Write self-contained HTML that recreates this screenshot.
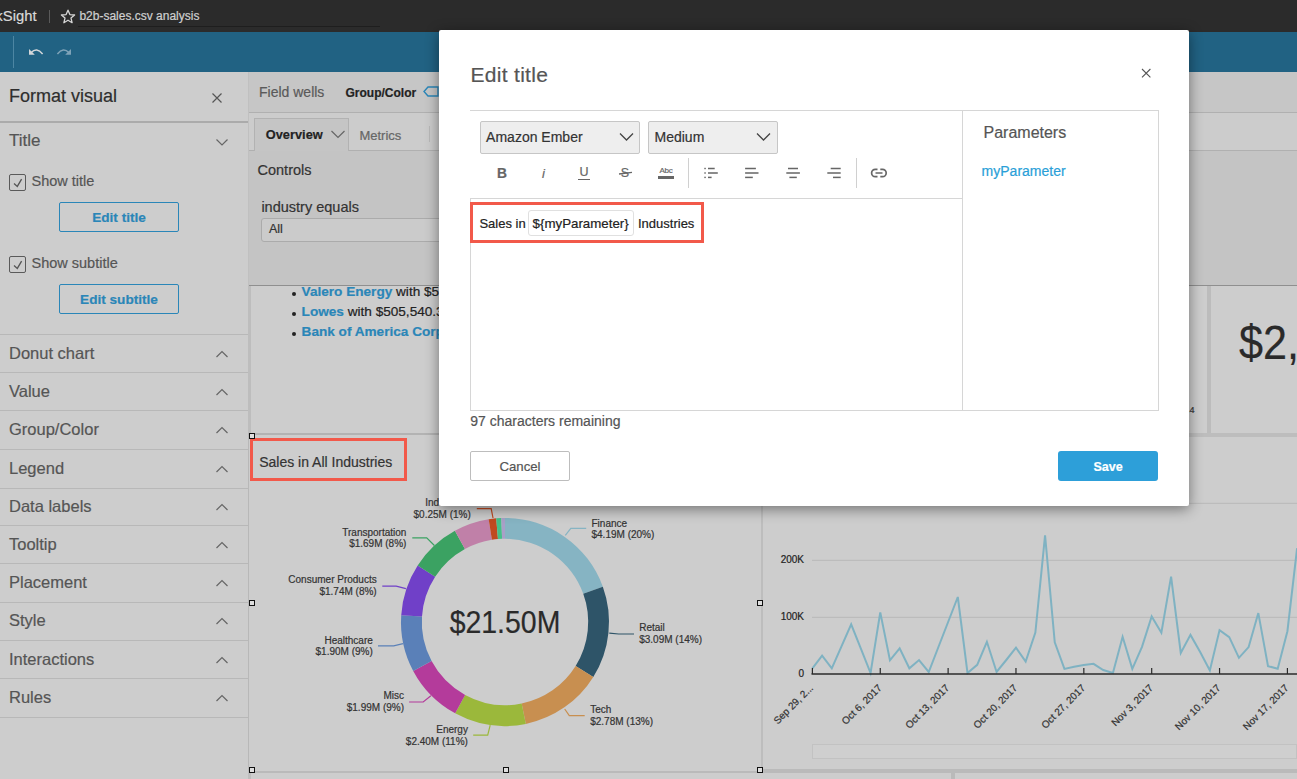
<!DOCTYPE html>
<html><head><meta charset="utf-8"><style>
html,body{margin:0;padding:0;width:1297px;height:779px;overflow:hidden;background:#cdcdcd;position:relative}
.t{position:absolute;line-height:1;white-space:nowrap;font-family:"Liberation Sans",sans-serif;-webkit-text-stroke:0.2px currentColor}
.r{position:absolute}
</style></head><body>
<div class="r" style="left:0px;top:0px;width:1297px;height:32px;background:#2b2b2b;"></div>
<div class="t" style="right:1260.50px;top:9.17px;font-size:14.8px;color:#d9d9d9;font-weight:400;">QuickSight</div>
<div class="r" style="left:49px;top:10px;width:1px;height:13px;background:#5a5a5a;"></div>
<svg class="r" style="left:60px;top:9px;" width="16" height="15" viewBox="0 0 16 15"><path d="M8 1.2 L9.9 5.6 L14.6 6 L11 9.1 L12.1 13.7 L8 11.2 L3.9 13.7 L5 9.1 L1.4 6 L6.1 5.6 Z" fill="none" stroke="#d6d6d6" stroke-width="1.3" stroke-linejoin="round"/></svg>
<div class="t" style="left:79.40px;top:10.34px;font-size:12px;color:#d0d0d0;font-weight:400;">b2b-sales.csv analysis</div>
<div class="r" style="left:78px;top:26px;width:302px;height:1px;background:#1e1e1e;"></div>
<div class="r" style="left:0px;top:32px;width:1297px;height:40px;background:#216283;"></div>
<div class="r" style="left:13px;top:36px;width:1px;height:32px;background:#4d86a3;"></div>
<svg class="r" style="left:27px;top:45px;" width="18" height="14" viewBox="0 0 18 14"><path d="M2 4 L2 9.8 L7.8 9.8 Z" fill="#d3d7da"/><path d="M4.2 7.6 Q9.6 1.6 15.6 8.9" fill="none" stroke="#d3d7da" stroke-width="1.5"/></svg>
<svg class="r" style="left:55px;top:45px;" width="18" height="14" viewBox="0 0 18 14"><path d="M16 4 L16 9.8 L10.2 9.8 Z" fill="#7fa3b8"/><path d="M13.8 7.6 Q8.4 1.6 2.4 8.9" fill="none" stroke="#7fa3b8" stroke-width="1.5"/></svg>
<div class="r" style="left:0px;top:72px;width:248px;height:1225px;background:#cdcdcd;"></div>
<div class="r" style="left:248px;top:72px;width:1px;height:214px;background:#c0c0c0;"></div>
<div class="t" style="left:9.00px;top:87.46px;font-size:18px;color:#2e2e2e;font-weight:400;">Format visual</div>
<svg class="r" style="left:211px;top:92px;" width="12" height="12" viewBox="0 0 12 12"><path d="M1.5 1.5 L10.5 10.5 M10.5 1.5 L1.5 10.5" stroke="#555" stroke-width="1.2"/></svg>
<div class="r" style="left:0px;top:121px;width:248px;height:2px;background:#ababab;"></div>
<div class="t" style="left:9.00px;top:132.41px;font-size:17px;color:#555;font-weight:400;">Title</div>
<svg class="r" style="left:215px;top:137px;" width="14" height="10" viewBox="0 0 14 10"><path d="M1.5 2.5 L7 8 L12.5 2.5" fill="none" stroke="#666" stroke-width="1.2"/></svg>
<div class="r" style="left:9px;top:174px;width:17px;height:17px;border:1.5px solid #5a5a5a;box-sizing:border-box;border-radius:2px;"></div>
<svg class="r" style="left:9px;top:174px;" width="17" height="17" viewBox="0 0 17 17"><path d="M5 9.6 L8.3 12.4 L12.6 5.2" fill="none" stroke="#555" stroke-width="1.3"/></svg>
<div class="t" style="left:31.50px;top:174.13px;font-size:14.5px;color:#555;font-weight:400;">Show title</div>
<div class="r" style="left:59px;top:202px;width:120px;height:30px;border:1px solid #2a86b8;box-sizing:border-box;border-radius:2px;"></div>
<div class="t" style="left:119.00px;transform:translateX(-50%);top:211.49px;font-size:13.6px;color:#2a86b8;font-weight:700;">Edit title</div>
<div class="r" style="left:9px;top:256px;width:17px;height:17px;border:1.5px solid #5a5a5a;box-sizing:border-box;border-radius:2px;"></div>
<svg class="r" style="left:9px;top:256px;" width="17" height="17" viewBox="0 0 17 17"><path d="M5 9.6 L8.3 12.4 L12.6 5.2" fill="none" stroke="#555" stroke-width="1.3"/></svg>
<div class="t" style="left:31.50px;top:256.13px;font-size:14.5px;color:#555;font-weight:400;">Show subtitle</div>
<div class="r" style="left:59px;top:284px;width:120px;height:30px;border:1px solid #2a86b8;box-sizing:border-box;border-radius:2px;"></div>
<div class="t" style="left:119.00px;transform:translateX(-50%);top:293.49px;font-size:13.6px;color:#2a86b8;font-weight:700;">Edit subtitle</div>
<div class="r" style="left:0px;top:334px;width:248px;height:1px;background:#b8b8b8;"></div>
<div class="t" style="left:9.00px;top:345.13px;font-size:16.5px;color:#555;font-weight:400;">Donut chart</div>
<svg class="r" style="left:215px;top:349px;" width="14" height="10" viewBox="0 0 14 10"><path d="M1.5 8 L7 2.5 L12.5 8" fill="none" stroke="#666" stroke-width="1.2"/></svg>
<div class="r" style="left:0px;top:372px;width:248px;height:1px;background:#b8b8b8;"></div>
<div class="t" style="left:9.00px;top:383.13px;font-size:16.5px;color:#555;font-weight:400;">Value</div>
<svg class="r" style="left:215px;top:387px;" width="14" height="10" viewBox="0 0 14 10"><path d="M1.5 8 L7 2.5 L12.5 8" fill="none" stroke="#666" stroke-width="1.2"/></svg>
<div class="r" style="left:0px;top:410px;width:248px;height:1px;background:#b8b8b8;"></div>
<div class="t" style="left:9.00px;top:421.03px;font-size:16.5px;color:#555;font-weight:400;">Group/Color</div>
<svg class="r" style="left:215px;top:425px;" width="14" height="10" viewBox="0 0 14 10"><path d="M1.5 8 L7 2.5 L12.5 8" fill="none" stroke="#666" stroke-width="1.2"/></svg>
<div class="r" style="left:0px;top:449px;width:248px;height:1px;background:#b8b8b8;"></div>
<div class="t" style="left:9.00px;top:460.13px;font-size:16.5px;color:#555;font-weight:400;">Legend</div>
<svg class="r" style="left:215px;top:464px;" width="14" height="10" viewBox="0 0 14 10"><path d="M1.5 8 L7 2.5 L12.5 8" fill="none" stroke="#666" stroke-width="1.2"/></svg>
<div class="r" style="left:0px;top:488px;width:248px;height:1px;background:#b8b8b8;"></div>
<div class="t" style="left:9.00px;top:498.43px;font-size:16.5px;color:#555;font-weight:400;">Data labels</div>
<svg class="r" style="left:215px;top:502px;" width="14" height="10" viewBox="0 0 14 10"><path d="M1.5 8 L7 2.5 L12.5 8" fill="none" stroke="#666" stroke-width="1.2"/></svg>
<div class="r" style="left:0px;top:525px;width:248px;height:1px;background:#b8b8b8;"></div>
<div class="t" style="left:9.00px;top:536.03px;font-size:16.5px;color:#555;font-weight:400;">Tooltip</div>
<svg class="r" style="left:215px;top:540px;" width="14" height="10" viewBox="0 0 14 10"><path d="M1.5 8 L7 2.5 L12.5 8" fill="none" stroke="#666" stroke-width="1.2"/></svg>
<div class="r" style="left:0px;top:563px;width:248px;height:1px;background:#b8b8b8;"></div>
<div class="t" style="left:9.00px;top:574.03px;font-size:16.5px;color:#555;font-weight:400;">Placement</div>
<svg class="r" style="left:215px;top:578px;" width="14" height="10" viewBox="0 0 14 10"><path d="M1.5 8 L7 2.5 L12.5 8" fill="none" stroke="#666" stroke-width="1.2"/></svg>
<div class="r" style="left:0px;top:602px;width:248px;height:1px;background:#b8b8b8;"></div>
<div class="t" style="left:9.00px;top:612.43px;font-size:16.5px;color:#555;font-weight:400;">Style</div>
<svg class="r" style="left:215px;top:616px;" width="14" height="10" viewBox="0 0 14 10"><path d="M1.5 8 L7 2.5 L12.5 8" fill="none" stroke="#666" stroke-width="1.2"/></svg>
<div class="r" style="left:0px;top:640px;width:248px;height:1px;background:#b8b8b8;"></div>
<div class="t" style="left:9.00px;top:651.23px;font-size:16.5px;color:#555;font-weight:400;">Interactions</div>
<svg class="r" style="left:215px;top:655px;" width="14" height="10" viewBox="0 0 14 10"><path d="M1.5 8 L7 2.5 L12.5 8" fill="none" stroke="#666" stroke-width="1.2"/></svg>
<div class="r" style="left:0px;top:678px;width:248px;height:1px;background:#b8b8b8;"></div>
<div class="t" style="left:9.00px;top:689.23px;font-size:16.5px;color:#555;font-weight:400;">Rules</div>
<svg class="r" style="left:215px;top:693px;" width="14" height="10" viewBox="0 0 14 10"><path d="M1.5 8 L7 2.5 L12.5 8" fill="none" stroke="#666" stroke-width="1.2"/></svg>
<div class="r" style="left:0px;top:717px;width:248px;height:1px;background:#b8b8b8;"></div>
<div class="r" style="left:249px;top:72px;width:1048px;height:40px;background:#c6c6c6;"></div>
<div class="t" style="left:259.00px;top:85.15px;font-size:14px;color:#5a5a5a;font-weight:400;">Field wells</div>
<div class="t" style="left:345.50px;top:87.24px;font-size:12px;color:#222;font-weight:700;">Group/Color</div>
<svg class="r" style="left:422px;top:86px;" width="18" height="12" viewBox="0 0 18 12"><path d="M6 1 L16 1 L16 10 L6 10 L2 5.5 Z" fill="none" stroke="#2a86b8" stroke-width="1.4"/></svg>
<div class="r" style="left:249px;top:112px;width:1048px;height:1px;background:#b0b0b0;"></div>
<div class="r" style="left:249px;top:113px;width:1048px;height:37px;background:#cccccc;"></div>
<div class="r" style="left:254px;top:118px;width:95px;height:33px;background:#c5c5c5;border:1px solid #b2b2b2;box-sizing:border-box;border-bottom:none;"></div>
<div class="r" style="left:249px;top:150px;width:5px;height:1px;background:#b0b0b0;"></div>
<div class="r" style="left:349px;top:150px;width:948px;height:1px;background:#b0b0b0;"></div>
<div class="t" style="left:265.80px;top:128.86px;font-size:12.8px;color:#222;font-weight:700;">Overview</div>
<svg class="r" style="left:330px;top:129px;" width="16" height="11" viewBox="0 0 16 11"><path d="M1.5 2 L8 8.5 L14.5 2" fill="none" stroke="#666" stroke-width="1.2"/></svg>
<div class="t" style="left:359.40px;top:128.70px;font-size:13px;color:#666;font-weight:400;">Metrics</div>
<div class="r" style="left:429px;top:126px;width:1px;height:16px;background:#b8b8b8;"></div>
<div class="r" style="left:249px;top:151px;width:1048px;height:134px;background:#c4c4c4;"></div>
<div class="t" style="left:257.50px;top:162.73px;font-size:14.5px;color:#333;font-weight:400;">Controls</div>
<div class="t" style="left:261.40px;top:199.73px;font-size:14.5px;color:#333;font-weight:400;">industry equals</div>
<div class="r" style="left:261px;top:218px;width:439px;height:24px;background:#cbcbcb;border:1px solid #ababab;box-sizing:border-box;border-radius:3px;"></div>
<div class="t" style="left:269.00px;top:223.42px;font-size:12.5px;color:#333;font-weight:400;">All</div>
<div class="r" style="left:249px;top:285px;width:1048px;height:1px;background:#8f8f8f;"></div>
<div class="r" style="left:250px;top:286px;width:1047px;height:493px;background:#cdcdcd;"></div>
<div class="r" style="left:248px;top:286px;width:3px;height:147px;background:#bdbdbd;"></div>
<div class="r" style="left:248px;top:433px;width:1px;height:338px;background:#b8b8b8;"></div>
<div class="r" style="left:248px;top:771px;width:3px;height:8px;background:#bdbdbd;"></div>
<div class="r" style="left:292px;top:291.5px;width:4px;height:4.0px;background:#222;border-radius:2px;"></div>
<div class="t" style="left:301.6px;top:284.99px;font-size:13.6px;color:#222"><b style="color:#2a86b8">Valero Energy</b> with $567,340.21</div>
<div class="r" style="left:292px;top:311.5px;width:4px;height:4.0px;background:#222;border-radius:2px;"></div>
<div class="t" style="left:301.6px;top:304.99px;font-size:13.6px;color:#222"><b style="color:#2a86b8">Lowes</b> with $505,540.37</div>
<div class="r" style="left:292px;top:331.5px;width:4px;height:4.0px;background:#222;border-radius:2px;"></div>
<div class="t" style="left:301.6px;top:324.99px;font-size:13.6px;color:#222"><b style="color:#2a86b8">Bank of America Corp</b> with $4</div>
<div class="r" style="left:1207px;top:286px;width:4px;height:147px;background:#bcbcbc;"></div>
<div class="t" style="left:1187.00px;top:406.38px;font-size:9px;color:#333;font-weight:400;">.4</div>
<div class="t" style="left:1239.00px;top:319.37px;font-size:48px;color:#2a2a2a;font-weight:400;transform-origin:0 0;transform:scaleX(0.9);">$2,</div>
<div class="r" style="left:248px;top:433px;width:941px;height:2px;background:#b3b3b3;"></div>
<div class="r" style="left:1189px;top:433px;width:108px;height:4px;background:#bdbdbd;"></div>
<div class="r" style="left:761px;top:437px;width:2px;height:334px;background:#bdbdbd;"></div>
<div class="r" style="left:249px;top:771px;width:512px;height:2px;background:#bababa;"></div>
<div class="r" style="left:761px;top:769px;width:536px;height:4px;background:#bababa;"></div>
<div class="r" style="left:951px;top:773px;width:4px;height:6px;background:#bababa;"></div>
<div class="r" style="left:250px;top:438px;width:157px;height:43px;border:3px solid #f2594a;box-sizing:border-box;"></div>
<div class="t" style="left:259.20px;top:454.75px;font-size:14px;color:#333;font-weight:400;">Sales in All Industries</div>
<svg class="r" style="left:0px;top:0px;pointer-events:none" width="1297" height="779" viewBox="0 0 1297 779"><path d="M505.00 518.00 A104 104 0 0 1 602.83 586.70 L583.26 593.76 A83.2 83.2 0 0 0 505.00 538.80 Z" fill="#86b4c3"/><path d="M602.83 586.70 A104 104 0 0 1 593.30 676.95 L575.64 665.96 A83.2 83.2 0 0 0 583.26 593.76 Z" fill="#2e5468"/><path d="M593.30 676.95 A104 104 0 0 1 525.83 723.89 L521.66 703.51 A83.2 83.2 0 0 0 575.64 665.96 Z" fill="#c88f50"/><path d="M525.83 723.89 A104 104 0 0 1 455.16 713.28 L465.13 695.03 A83.2 83.2 0 0 0 521.66 703.51 Z" fill="#9bb83b"/><path d="M455.16 713.28 A104 104 0 0 1 413.21 670.90 L431.57 661.12 A83.2 83.2 0 0 0 465.13 695.03 Z" fill="#b43b9b"/><path d="M413.21 670.90 A104 104 0 0 1 401.22 615.17 L421.98 616.53 A83.2 83.2 0 0 0 431.57 661.12 Z" fill="#5a80b8"/><path d="M401.22 615.17 A104 104 0 0 1 417.68 565.51 L435.15 576.81 A83.2 83.2 0 0 0 421.98 616.53 Z" fill="#7040c8"/><path d="M417.68 565.51 A104 104 0 0 1 454.90 530.86 L464.92 549.09 A83.2 83.2 0 0 0 435.15 576.81 Z" fill="#3ba262"/><path d="M454.90 530.86 A104 104 0 0 1 488.66 519.29 L491.92 539.83 A83.2 83.2 0 0 0 464.92 549.09 Z" fill="#c080a8"/><path d="M488.66 519.29 A104 104 0 0 1 496.20 518.37 L497.96 539.10 A83.2 83.2 0 0 0 491.92 539.83 Z" fill="#c04a20"/><path d="M496.20 518.37 A104 104 0 0 1 501.35 518.06 L502.08 538.85 A83.2 83.2 0 0 0 497.96 539.10 Z" fill="#45c088"/><path d="M501.35 518.06 A104 104 0 0 1 505.00 518.00 L505.00 538.80 A83.2 83.2 0 0 0 502.08 538.85 Z" fill="#a8a0c8"/><polyline points="565.3,535.4 570.8,528.4 586.2,528.4" fill="none" stroke="#86b4c3" stroke-width="1.2"/><polyline points="609.3,633.1 618.6,634 634,634" fill="none" stroke="#2e5468" stroke-width="1.2"/><polyline points="564.7,709 569.3,715.7 584.7,715.7" fill="none" stroke="#c88f50" stroke-width="1.2"/><polyline points="490.2,725.1 487.7,735.1 473.2,735.1" fill="none" stroke="#9bb83b" stroke-width="1.2"/><polyline points="430.9,695.7 423.2,702 409.1,702" fill="none" stroke="#b43b9b" stroke-width="1.2"/><polyline points="403,643.7 393.7,645.8 378,645.8" fill="none" stroke="#5a80b8" stroke-width="1.2"/><polyline points="405.9,588.6 396.2,586.1 382.3,586.1" fill="none" stroke="#7040c8" stroke-width="1.2"/><polyline points="434.4,545.5 426.7,537.9 412.3,537.9" fill="none" stroke="#3ba262" stroke-width="1.2"/><polyline points="493,518 491.2,508.6 476.8,508.6" fill="none" stroke="#c04a20" stroke-width="1.2"/></svg>
<div class="t" style="left:504.50px;transform:translateX(-50%);top:606.96px;font-size:31px;color:#2a2a2a;font-weight:400;transform:translateX(-50%) scaleX(0.918);">$21.50M</div>
<div class="t" style="left:591.50px;top:518.63px;font-size:10px;color:#333;font-weight:400;">Finance</div>
<div class="t" style="left:591.50px;top:530.34px;font-size:10px;color:#333;font-weight:400;">$4.19M (20%)</div>
<div class="t" style="left:639.20px;top:623.43px;font-size:10px;color:#333;font-weight:400;">Retail</div>
<div class="t" style="left:639.20px;top:635.13px;font-size:10px;color:#333;font-weight:400;">$3.09M (14%)</div>
<div class="t" style="left:590.20px;top:705.03px;font-size:10px;color:#333;font-weight:400;">Tech</div>
<div class="t" style="left:590.20px;top:716.74px;font-size:10px;color:#333;font-weight:400;">$2.78M (13%)</div>
<div class="t" style="right:829.10px;top:725.03px;font-size:10px;color:#333;font-weight:400;">Energy</div>
<div class="t" style="right:829.10px;top:736.74px;font-size:10px;color:#333;font-weight:400;">$2.40M (11%)</div>
<div class="t" style="right:893.00px;top:691.43px;font-size:10px;color:#333;font-weight:400;">Misc</div>
<div class="t" style="right:893.00px;top:703.13px;font-size:10px;color:#333;font-weight:400;">$1.99M (9%)</div>
<div class="t" style="right:924.20px;top:635.53px;font-size:10px;color:#333;font-weight:400;">Healthcare</div>
<div class="t" style="right:924.20px;top:647.24px;font-size:10px;color:#333;font-weight:400;">$1.90M (9%)</div>
<div class="t" style="right:920.30px;top:575.33px;font-size:10px;color:#333;font-weight:400;">Consumer Products</div>
<div class="t" style="right:920.30px;top:587.03px;font-size:10px;color:#333;font-weight:400;">$1.74M (8%)</div>
<div class="t" style="right:890.60px;top:527.63px;font-size:10px;color:#333;font-weight:400;">Transportation</div>
<div class="t" style="right:890.60px;top:539.34px;font-size:10px;color:#333;font-weight:400;">$1.69M (8%)</div>
<div class="t" style="right:826.20px;top:497.63px;font-size:10px;color:#333;font-weight:400;">Industrials</div>
<div class="t" style="right:826.20px;top:510.14px;font-size:10px;color:#333;font-weight:400;">$0.25M (1%)</div>
<svg class="r" style="left:0px;top:0px;pointer-events:none" width="1297" height="779" viewBox="0 0 1297 779"><line x1="812" y1="617.3" x2="1297" y2="617.3" stroke="#b8b8b8" stroke-width="1"/><line x1="812" y1="560.3" x2="1297" y2="560.3" stroke="#b8b8b8" stroke-width="1"/><line x1="812" y1="503.3" x2="1297" y2="503.3" stroke="#b8b8b8" stroke-width="1"/><polyline points="812.40,668.30 822.09,655.60 831.79,668.30 841.48,646.30 851.18,624.40 860.87,648.60 870.56,673.00 880.26,612.40 889.95,660.30 899.65,648.40 909.34,668.30 919.03,660.10 928.73,672.00 938.42,647.00 948.12,622.00 957.81,597.00 967.50,673.00 977.20,664.80 986.89,641.80 996.59,672.00 1006.28,660.00 1015.97,647.60 1025.67,661.50 1035.36,632.60 1045.06,535.30 1054.75,642.40 1064.44,668.90 1074.14,666.70 1083.83,664.90 1093.53,663.80 1103.22,670.00 1112.91,673.00 1122.61,636.80 1132.30,668.90 1142.00,646.90 1151.69,616.50 1161.38,632.70 1171.08,576.60 1180.77,653.00 1190.47,634.90 1200.16,652.00 1209.85,670.50 1219.55,630.10 1229.24,637.10 1238.94,657.80 1248.63,647.10 1258.32,613.10 1268.02,666.10 1277.71,668.70 1287.41,631.20 1297.10,548.20" fill="none" stroke="#7fb2c2" stroke-width="2" stroke-linejoin="miter"/><line x1="811.5" y1="674" x2="1297" y2="674" stroke="#2a2a2a" stroke-width="1.5"/><line x1="812.40" y1="668" x2="812.40" y2="674" stroke="#2a2a2a" stroke-width="1.2"/><line x1="880.26" y1="668" x2="880.26" y2="674" stroke="#2a2a2a" stroke-width="1.2"/><line x1="948.12" y1="668" x2="948.12" y2="674" stroke="#2a2a2a" stroke-width="1.2"/><line x1="1015.97" y1="668" x2="1015.97" y2="674" stroke="#2a2a2a" stroke-width="1.2"/><line x1="1083.83" y1="668" x2="1083.83" y2="674" stroke="#2a2a2a" stroke-width="1.2"/><line x1="1151.69" y1="668" x2="1151.69" y2="674" stroke="#2a2a2a" stroke-width="1.2"/><line x1="1219.55" y1="668" x2="1219.55" y2="674" stroke="#2a2a2a" stroke-width="1.2"/><line x1="1287.41" y1="668" x2="1287.41" y2="674" stroke="#2a2a2a" stroke-width="1.2"/></svg>
<div class="t" style="right:493.00px;top:669.03px;font-size:10px;color:#222;font-weight:400;">0</div>
<div class="t" style="right:493.00px;top:612.33px;font-size:10px;color:#222;font-weight:400;">100K</div>
<div class="t" style="right:493.00px;top:555.33px;font-size:10px;color:#222;font-weight:400;">200K</div>
<div class="t" style="right:488.60px;top:682.5px;font-size:10px;color:#333;transform-origin:100% 0;transform:rotate(-45deg)">Sep 29, 2...</div>
<div class="t" style="right:420.74px;top:682.5px;font-size:10px;color:#333;transform-origin:100% 0;transform:rotate(-45deg)">Oct 6, 2017</div>
<div class="t" style="right:352.88px;top:682.5px;font-size:10px;color:#333;transform-origin:100% 0;transform:rotate(-45deg)">Oct 13, 2017</div>
<div class="t" style="right:285.03px;top:682.5px;font-size:10px;color:#333;transform-origin:100% 0;transform:rotate(-45deg)">Oct 20, 2017</div>
<div class="t" style="right:217.17px;top:682.5px;font-size:10px;color:#333;transform-origin:100% 0;transform:rotate(-45deg)">Oct 27, 2017</div>
<div class="t" style="right:149.31px;top:682.5px;font-size:10px;color:#333;transform-origin:100% 0;transform:rotate(-45deg)">Nov 3, 2017</div>
<div class="t" style="right:81.45px;top:682.5px;font-size:10px;color:#333;transform-origin:100% 0;transform:rotate(-45deg)">Nov 10, 2017</div>
<div class="t" style="right:13.59px;top:682.5px;font-size:10px;color:#333;transform-origin:100% 0;transform:rotate(-45deg)">Nov 17, 2017</div>
<div class="r" style="left:812px;top:744px;width:485px;height:15px;background:#cfcfcf;border:1px solid #c2c2c2;box-sizing:border-box;"></div>
<div class="r" style="left:249px;top:433px;width:6px;height:6px;background:#dedede;border:1px solid #111;box-sizing:border-box;"></div>
<div class="r" style="left:249px;top:600px;width:6px;height:6px;background:#dedede;border:1px solid #111;box-sizing:border-box;"></div>
<div class="r" style="left:249px;top:767px;width:6px;height:6px;background:#dedede;border:1px solid #111;box-sizing:border-box;"></div>
<div class="r" style="left:503px;top:767px;width:6px;height:6px;background:#dedede;border:1px solid #111;box-sizing:border-box;"></div>
<div class="r" style="left:757px;top:600px;width:6px;height:6px;background:#dedede;border:1px solid #111;box-sizing:border-box;"></div>
<div class="r" style="left:757px;top:767px;width:6px;height:6px;background:#dedede;border:1px solid #111;box-sizing:border-box;"></div>
<div class="r" style="left:439px;top:30px;width:750px;height:476px;background:#fff;border-radius:2px;box-shadow:0 3px 14px rgba(0,0,0,0.45)"></div>
<div class="t" style="left:470.50px;top:64.32px;font-size:21px;color:#555;font-weight:400;letter-spacing:0.3px;">Edit title</div>
<svg class="r" style="left:1140px;top:67px;" width="12" height="12" viewBox="0 0 12 12"><path d="M2 2 L10.4 10.4 M10.4 2 L2 10.4" stroke="#555" stroke-width="1.1"/></svg>
<div class="r" style="left:470px;top:110px;width:689px;height:1px;background:#d6d6d6;"></div>
<div class="r" style="left:1158px;top:110px;width:1px;height:301px;background:#d6d6d6;"></div>
<div class="r" style="left:962px;top:110px;width:1px;height:301px;background:#d6d6d6;"></div>
<div class="r" style="left:470px;top:198px;width:493px;height:1px;background:#d6d6d6;"></div>
<div class="r" style="left:470px;top:198px;width:1px;height:213px;background:#d6d6d6;"></div>
<div class="r" style="left:470px;top:410px;width:689px;height:1px;background:#d6d6d6;"></div>
<div class="r" style="left:480px;top:121px;width:160px;height:33px;background:#eeeeee;border:1px solid #c6c6c6;box-sizing:border-box;border-radius:2px;"></div>
<div class="t" style="left:486.10px;top:130.05px;font-size:14px;color:#333;font-weight:400;">Amazon Ember</div>
<svg class="r" style="left:618px;top:131px;" width="17" height="12" viewBox="0 0 17 12"><path d="M2 2.5 L8.5 9 L15 2.5" fill="none" stroke="#444" stroke-width="1.3"/></svg>
<div class="r" style="left:648px;top:121px;width:130px;height:33px;background:#eeeeee;border:1px solid #c6c6c6;box-sizing:border-box;border-radius:2px;"></div>
<div class="t" style="left:654.50px;top:130.05px;font-size:14px;color:#333;font-weight:400;">Medium</div>
<svg class="r" style="left:755px;top:131px;" width="17" height="12" viewBox="0 0 17 12"><path d="M2 2.5 L8.5 9 L15 2.5" fill="none" stroke="#444" stroke-width="1.3"/></svg>
<div class="r" style="left:688px;top:158px;width:1px;height:30px;background:#d0d0d0;"></div>
<div class="r" style="left:856px;top:158px;width:1px;height:30px;background:#d0d0d0;"></div>
<div class="t" style="left:502.00px;transform:translateX(-50%);top:166.52px;font-size:13.8px;color:#666;font-weight:700;">B</div>
<div class="t" style="left:543.50px;transform:translateX(-50%);top:167.20px;font-size:13px;color:#666;font-weight:400;font-style:italic;">i</div>
<div class="t" style="left:584.00px;transform:translateX(-50%);top:166.42px;font-size:12.5px;color:#666;font-weight:400;">U</div>
<div class="r" style="left:578px;top:178.5px;width:12px;height:1.5px;background:#666;"></div>
<div class="t" style="left:625.00px;transform:translateX(-50%);top:167.42px;font-size:12.5px;color:#666;font-weight:400;">S</div>
<div class="t" style="left:666.00px;transform:translateX(-50%);top:167.23px;font-size:8px;color:#666;font-weight:400;letter-spacing:-0.3px;">Abc</div>
<div class="r" style="left:658px;top:176px;width:16px;height:3px;background:#666;"></div>
<svg class="r" style="left:0px;top:0px;pointer-events:none" width="1297" height="779" viewBox="0 0 1297 779"><path d="M619 174 L632 172.3" stroke="#666" stroke-width="1.3"/><rect x="704.3" y="167.8" width="1.5" height="1.4" fill="#666"/><rect x="708" y="167.75" width="6.7" height="1.5" fill="#666"/><rect x="704.3" y="172.3" width="1.5" height="1.4" fill="#666"/><rect x="708" y="172.25" width="9.8" height="1.5" fill="#666"/><rect x="704.3" y="176.70000000000002" width="1.5" height="1.4" fill="#666"/><rect x="708" y="176.65" width="3.6" height="1.5" fill="#666"/><rect x="745.1" y="167.75" width="10.8" height="1.5" fill="#666"/><rect x="745.1" y="172.25" width="13.4" height="1.5" fill="#666"/><rect x="745.1" y="176.65" width="7.7" height="1.5" fill="#666"/><rect x="788" y="167.75" width="10.0" height="1.5" fill="#666"/><rect x="786.3" y="172.25" width="13.6" height="1.5" fill="#666"/><rect x="789.4" y="176.65" width="7.4" height="1.5" fill="#666"/><rect x="830.7" y="167.75" width="10.0" height="1.5" fill="#666"/><rect x="827.3" y="172.25" width="13.4" height="1.5" fill="#666"/><rect x="833" y="176.65" width="7.7" height="1.5" fill="#666"/><path d="M877.5 169.3 h-2.2 a3.7 3.7 0 0 0 0 7.4 h2.2 M880.3 169.3 h2.2 a3.7 3.7 0 0 1 0 7.4 h-2.2 M875.5 173 h7" fill="none" stroke="#666" stroke-width="1.7"/></svg>
<div class="r" style="left:470px;top:202px;width:234px;height:41px;border:3px solid #f2594a;box-sizing:border-box;"></div>
<div class="t" style="left:479.40px;top:217.20px;font-size:13px;color:#222;font-weight:400;">Sales in</div>
<div class="r" style="left:528px;top:210px;width:106px;height:26px;background:#fff;border:1px solid #e0e0e0;box-sizing:border-box;border-radius:3px;"></div>
<div class="t" style="left:532.60px;top:216.94px;font-size:13.3px;color:#222;font-weight:400;">${myParameter}</div>
<div class="t" style="left:638.00px;top:217.20px;font-size:13px;color:#222;font-weight:400;">Industries</div>
<div class="t" style="left:983.50px;top:124.66px;font-size:16px;color:#555;font-weight:400;">Parameters</div>
<div class="t" style="left:981.60px;top:164.15px;font-size:14px;color:#2a9fd8;font-weight:400;">myParameter</div>
<div class="t" style="left:470.30px;top:413.95px;font-size:14px;color:#555;font-weight:400;">97 characters remaining</div>
<div class="r" style="left:470px;top:451px;width:100px;height:30px;background:#fff;border:1px solid #bdbdbd;box-sizing:border-box;border-radius:2px;"></div>
<div class="t" style="left:520.00px;transform:translateX(-50%);top:460.23px;font-size:13.2px;color:#555;font-weight:400;">Cancel</div>
<div class="r" style="left:1058px;top:451px;width:100px;height:30px;background:#2d9fd9;border-radius:3px;"></div>
<div class="t" style="left:1108.00px;transform:translateX(-50%);top:461.02px;font-size:12.5px;color:#fff;font-weight:700;">Save</div>
</body></html>
